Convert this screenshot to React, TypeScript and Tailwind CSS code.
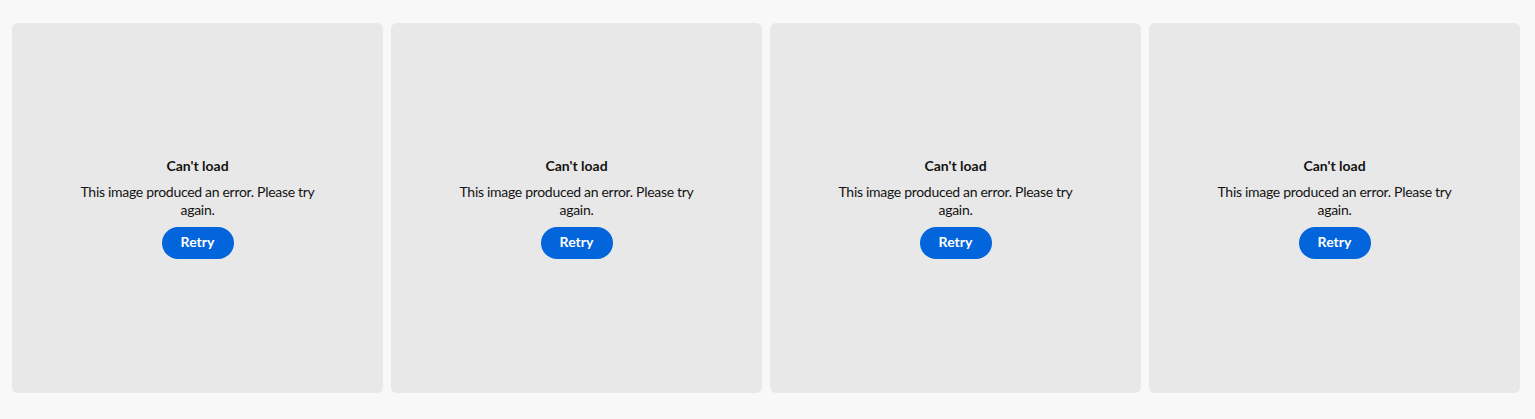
const cards = [1, 2, 3, 4];

function ErrorCard() {
  return (
    <div className="flex h-[370px] w-[371px] flex-col items-center justify-center rounded-md bg-[#e8e8e8] text-center">
      <div className="text-[14px] font-bold leading-[18px] text-[#131313]">Can't load</div>
      <p className="mt-2 max-w-[244px] text-[14px] leading-[18px] tracking-[-0.3px] text-[#131313]">
        This image produced an error. Please try again.
      </p>
      <button className="mt-2 h-8 w-[72px] rounded-full bg-[#0265dc] pb-[3px] text-[14px] font-bold text-white">
        Retry
      </button>
    </div>
  );
}

export default function App() {
  return (
    <div className="min-h-[419px] bg-[#f8f8f8] pl-3 pt-[23px] font-['Lato',sans-serif]">
      <div className="flex gap-2">
        {cards.map((c) => (
          <ErrorCard key={c} />
        ))}
      </div>
    </div>
  );
}
